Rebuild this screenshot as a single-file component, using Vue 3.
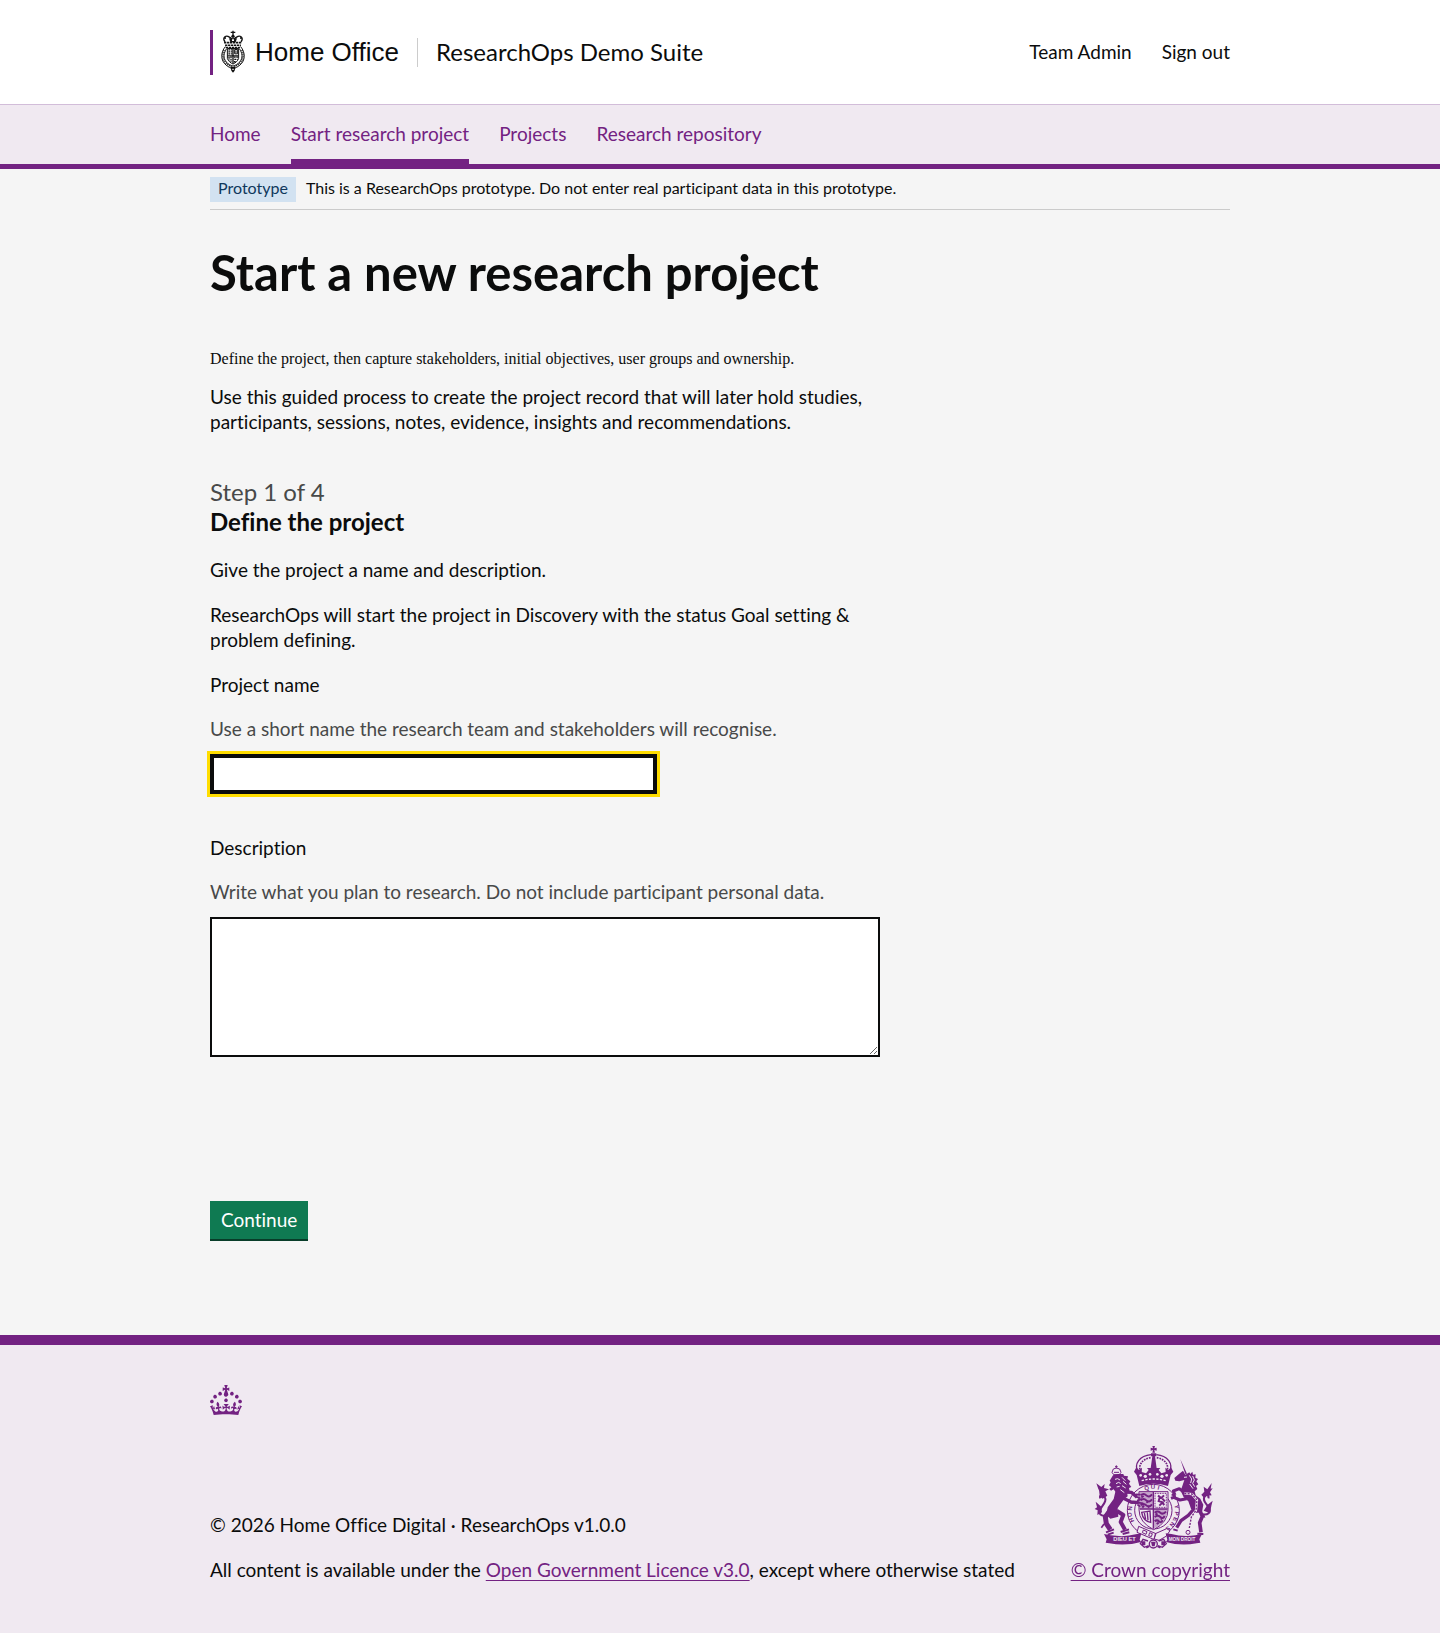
<script setup>
import { onMounted, ref } from 'vue'

const accountLinks = ['Team Admin', 'Sign out']
const navItems = ['Home', 'Start research project', 'Projects', 'Research repository']
const activeItem = 'Start research project'

const name = ref('')
const description = ref('')
const nameInput = ref(null)

onMounted(() => {
    nameInput.value.focus()
})
</script>

<template>
    <div class="page">
        <header class="header">
            <div class="container header-row">
                <a class="logo" href="#">
                    <svg class="logo-crest" viewBox="0 0 72 130" aria-hidden="true">
                        <g fill="none" stroke="#111" stroke-width="4">
                            <path d="M36 2v16M29 7h14M12 36C4 26 10 16 21 19c8 3 12 8 15 12 3-4 7-9 15-12 11-3 17 7 9 17" />
                            <path d="M9 38h54M12 46h48M14 53h44" stroke-width="5" stroke-dasharray="7 2" />
                            <path d="M13 50C-2 68-2 92 15 106c7 6 14 9 21 12 7-3 14-6 21-12 17-14 17-38 2-56" stroke-width="3" />
                            <path d="M17 56C7 70 6 84 15 96c7 8 14 11 21 13 7-2 14-5 21-13 9-12 8-26-2-40" stroke-width="3" />
                            <path d="M9 60c-6 14-5 30 8 42q9 7 19 11M63 60c6 14 5 30-8 42q-9 7-19 11" stroke-width="5" stroke-dasharray="3 3" />
                            <path d="M19 56v30c3 8 9 13 17 17 8-4 14-9 17-17V56z" stroke-width="3" />
                            <path d="M36 56v45M20 78h32" stroke-width="4" />
                            <path d="M22 60h12M22 66h12M22 72h12M24 82v10M30 80v16M39 82h12M40 89h10M39 96h7" stroke-width="4" stroke-dasharray="5 2" />
                            <path d="M41 59h9v13h-9zM45 62v8" stroke-width="3" />
                        </g>
                        <g fill="#111">
                            <circle cx="36" cy="19" r="5" />
                            <circle cx="12" cy="24" r="3" />
                            <circle cx="60" cy="24" r="3" />
                            <path d="M24 25h24l-4 12H28zM29 112h14l-2 11-5 6-5-6z" />
                        </g>
                        <path d="M33 28h6v5h-6zM34 117h4v4h-4z" fill="#fff" />
                    </svg>
                    <span>Home Office</span>
                </a>
                <a class="service-name" href="#">ResearchOps Demo Suite</a>
                <nav class="account" aria-label="Account">
                    <a v-for="link in accountLinks" :key="link" href="#">{{ link }}</a>
                </nav>
            </div>
        </header>

        <nav class="service-nav" aria-label="Service">
            <div class="container nav-list">
                <a
                    v-for="item in navItems"
                    :key="item"
                    class="nav-link"
                    :class="{ active: item === activeItem }"
                    href="#"
                >{{ item }}</a>
            </div>
        </nav>

        <div class="container">
            <div class="phase-banner">
                <strong class="tag">Prototype</strong>
                <span>This is a ResearchOps prototype. Do not enter real participant data in this prototype.</span>
            </div>
        </div>

        <main class="container main">
            <div class="two-thirds">
                <h1>Start a new research project</h1>
                <p class="summary">Define the project, then capture stakeholders, initial objectives, user groups and ownership.</p>
                <p class="intro">Use this guided process to create the project record that will later hold studies, participants, sessions, notes, evidence, insights and recommendations.</p>

                <form @submit.prevent>
                    <span class="caption">Step 1 of 4</span>
                    <h2>Define the project</h2>
                    <p>Give the project a name and description.</p>
                    <p>ResearchOps will start the project in Discovery with the status Goal setting &amp; problem defining.</p>

                    <div class="field">
                        <label for="project-name">Project name</label>
                        <div id="project-name-hint" class="hint">Use a short name the research team and stakeholders will recognise.</div>
                        <input id="project-name" ref="nameInput" v-model="name" class="input" type="text" aria-describedby="project-name-hint">
                    </div>

                    <div class="field">
                        <label for="project-description">Description</label>
                        <div id="project-description-hint" class="hint">Write what you plan to research. Do not include participant personal data.</div>
                        <textarea id="project-description" v-model="description" class="textarea" rows="5" aria-describedby="project-description-hint"></textarea>
                    </div>

                    <button class="button" type="submit">Continue</button>
                </form>
            </div>
        </main>

        <footer class="footer">
            <div class="container">
                <svg class="crown" viewBox="0 0 32 30" fill="currentColor" aria-hidden="true">
                    <path d="M22.6 10.4c-1 .4-2-.1-2.4-1-.4-.9.1-2 1-2.4.9-.4 2 .1 2.4 1s-.1 2-1 2.4m-5.9 6.7c-.9.4-2-.1-2.4-1-.4-.9.1-2 1-2.4.9-.4 2 .1 2.4 1s-.1 2-1 2.4m10.8-3.7c-1 .4-2-.1-2.4-1-.4-.9.1-2 1-2.4.9-.4 2 .1 2.4 1s0 2-1 2.4m3.3 4.8c-1 .4-2-.1-2.4-1-.4-.9.1-2 1-2.4.9-.4 2 .1 2.4 1s-.1 2-1 2.4M17 4.7l2.3 1.2V2.5l-2.3.7-.2-.2.9-3h-3.4l.9 3-.2.2c-.1.1-2.3-.7-2.3-.7v3.4L15 4.7c.1.1.1.2.2.2l-1.3 4c-.1.2-.1.4-.1.6 0 1.1.8 2 1.9 2.2h.7c1-.2 1.9-1.1 1.9-2.1 0-.2 0-.4-.1-.6l-1.3-4c-.1-.2 0-.2.1-.3m-7.6 5.7c.9.4 2-.1 2.4-1 .4-.9-.1-2-1-2.4-.9-.4-2 .1-2.4 1s0 2 1 2.4m-5 3c.9.4 2-.1 2.4-1 .4-.9-.1-2-1-2.4-.9-.4-2 .1-2.4 1s.1 2 1 2.4m-3.2 4.8c.9.4 2-.1 2.4-1 .4-.9-.1-2-1-2.4-.9-.4-2 .1-2.4 1s0 2 1 2.4m14.8 11c4.4 0 8.6.3 12.3.8 1.1-4.5 2.4-7 3.7-8.8l-2.5-.9c.2 1.3.3 1.9 0 2.7-.4-.4-.8-1.1-1.1-2.3l-1.2 4c.7-.5 1.3-.8 2-.9-1.1 2.5-2.6 3.1-3.5 3-1.1-.2-1.7-1.2-1.5-2.1.3-1.2 1.5-1.5 2.1-.1 1.1-2.3-.8-3-2-2.3 1.9-1.9 2.1-3.5.6-5.6-2.1 1.6-2.1 3.2-1.2 5.5-1.2-1.4-3.2-.6-2.5 1.6.9-1.4 2.1-.5 1.9.8-.2 1.1-1.7 2.1-3.5 1.9-2.7-.2-2.9-2.1-2.9-3.6.7-.1 1.9.5 2.9 1.9l.4-4.3c-1.1 1.1-2.1 1.4-3.2 1.4.4-1.2 2.1-3 2.1-3h-5.4s1.7 1.9 2.1 3c-1.1 0-2.1-.2-3.2-1.4l.4 4.3c1-1.4 2.2-2 2.9-1.9-.1 1.5-.2 3.4-2.9 3.6-1.9.2-3.4-.8-3.5-1.9-.2-1.3 1-2.2 1.9-.8.7-2.3-1.2-3-2.5-1.6.9-2.2.9-3.9-1.2-5.5-1.5 2-1.3 3.7.6 5.6-1.2-.7-3.1 0-2 2.3.6-1.4 1.8-1.1 2.1.1.2.9-.3 1.9-1.5 2.1-.9.2-2.4-.5-3.5-3 .6 0 1.2.3 2 .9l-1.2-4c-.3 1.1-.7 1.9-1.1 2.3-.3-.8-.2-1.4 0-2.7l-2.9.9C1.3 23 2.6 25.5 3.7 30c3.7-.5 7.9-.8 12.3-.8" />
                </svg>
                <div class="footer-row">
                    <div class="footer-text">
                        <p>© 2026 Home Office Digital · ResearchOps v1.0.0</p>
                        <p>All content is available under the <a href="#">Open Government Licence v3.0</a>, except where otherwise stated</p>
                    </div>
                    <a class="copyright" href="#">
                        <svg class="arms" viewBox="0 0 378 336" fill="currentColor" aria-hidden="true">
                            <!-- garter with its motto -->
                            <circle cx="190" cy="211" r="78" fill="#f0e9f1" stroke="currentColor" stroke-width="3" />
                            <circle cx="190" cy="211" r="56" fill="none" stroke="currentColor" stroke-width="3" />
                            <g font-size="18" font-weight="bold" font-family="Liberation Sans, sans-serif" text-anchor="middle">
                                <text transform="translate(130 238) rotate(-114)">H</text>
                                <text transform="translate(125 223) rotate(-98)">O</text>
                                <text transform="translate(126 206) rotate(-84)">N</text>
                                <text transform="translate(129 191) rotate(-70)">I</text>
                                <text transform="translate(172 150) rotate(-16)">Q</text>
                                <text transform="translate(189 147)">U</text>
                                <text transform="translate(204 149) rotate(14)">I</text>
                                <text transform="translate(254 201) rotate(82)">Y</text>
                                <text transform="translate(254 220) rotate(98)">P</text>
                                <text transform="translate(250 236) rotate(114)">E</text>
                                <text transform="translate(242 250) rotate(128)">N</text>
                                <text transform="translate(230 261) rotate(142)">S</text>
                            </g>

                            <!-- crown -->
                            <path d="M142 88q48-92 96 0l-10 44h-76z" fill="#f0e9f1" />
                            <path d="M187 18h8l-2 7 7-2v9l-7-2 2 8h-8l2-8-7 2v-9l7 2zM183 40h16v9h-16zM187 49h8l5 36-9 15-9-15z" />
                            <g fill="none" stroke="currentColor">
                                <path d="M144 98c-14-28 6-51 39-54M238 98c14-28-6-51-39-54" stroke-width="4" />
                                <path d="M152 96c-9-21 5-39 30-43M230 96c9-21-5-39-30-43" stroke-width="5" stroke-dasharray="5 3" />
                            </g>
                            <path d="M139 82l8 8 9-7-1 13 13 4 8-10-5-6h40l-5 6 8 10 13-4-1-13 9 7 8-8 7 13-8 10-8 33q-43-14-86 0l-8-33-8-10z" />
                            <g fill="#f0e9f1">
                                <circle cx="152" cy="106" r="4" />
                                <circle cx="166" cy="109" r="5" />
                                <circle cx="180" cy="103" r="4" />
                                <circle cx="202" cy="103" r="4" />
                                <circle cx="216" cy="109" r="5" />
                                <circle cx="230" cy="106" r="4" />
                            </g>
                            <path d="M155 122q36-10 72 0" fill="none" stroke="#f0e9f1" stroke-width="4" stroke-dasharray="7 4" />

                            <!-- quartered shield -->
                            <path d="M147 155h87v54q0 38-43 60-44-22-44-60z" fill="#f0e9f1" stroke="currentColor" stroke-width="3" />
                            <path d="M149 157h40v49h-40zM191 207h41q0 38-41 59z" opacity=".35" />
                            <g fill="none" stroke="currentColor">
                                <path d="M190 156v110M149 207h84" stroke-width="4" />
                                <path d="M152 166q9-8 17 0t17-3M152 181q9-8 17 0t17-3M152 196q9-8 17 0t17-3M154 172l7-4M169 188l8-5M157 203l5-7M174 203l5-7" stroke-width="6" />
                                <path d="M195 160h34v42h-34z" stroke-width="3" stroke-dasharray="3 2" />
                                <path d="M204 167l10 7 8-8M210 169l-4 14 12 4-10 10M217 176l8 8M216 187l7 8" stroke-width="6" />
                                <path d="M155 217l25-4 2 34q-23-4-27-30zM163 219l4 19M172 217l2 24" stroke-width="4" />
                                <path d="M194 218q9-7 17 0t17-3M194 231q9-7 17 0t13-3M194 244q7-6 13 0t11-3M197 225l5-5M212 238l5-5M200 252l6-4" stroke-width="6" />
                            </g>

                            <!-- garter buckle -->
                            <path d="M146 259l52 22-7 17-50-21zM196 281l34-15 10 6-12 17-21 12-14-4z" fill="#f0e9f1" stroke="currentColor" stroke-width="3" />
                            <path d="M160 270l11 5-3 8-11-5zM179 278l8 3-3 9-8-3z" fill="none" stroke="currentColor" stroke-width="3" />

                            <!-- lion -->
                            <path d="M66 97l4-10 9-3 10 3 4 10-5 7H71z" fill="none" stroke="currentColor" stroke-width="3" />
                            <path d="M79 76v9M75 80h8M72 97h15" stroke="currentColor" stroke-width="3" />
                            <path d="M69 106l14-4 17 0 2 5 12 2-2 7 9 8-4 7 7 10-7 3 2 10-8 1 2 14-10 7-20 28 2 26-24 6-12-12 4-22 18-25 5-22-5-7-8 4-5-5 6-5-7-6 5-9-3-5z" />
                            <g fill="none" stroke="currentColor" stroke-linejoin="round">
                                <path d="M104 156l20 1 17 15" stroke-width="10" />
                                <path d="M99 174l24 12 23 2" stroke-width="10" />
                                <path d="M137 163l14 1M139 171l12 4M141 182l15-5M144 188l16 2M142 194l9 6" stroke-width="5" />
                                <path d="M63 208l-17 23 3 20 12 18" stroke-width="15" />
                                <path d="M42 252l-8 11" stroke-width="5" />
                                <path d="M81 213l19 12-8 21 13 23" stroke-width="12" />
                                <path d="M48 277l24-9M53 284l18-6M92 276l25-8M98 282l20-5" stroke-width="6" />
                                <path d="M52 225c-19 6-29-4-20-19 8-14 20-23 11-37-6-8-16-4-12 6" stroke-width="6" />
                            </g>
                            <path d="M38 176c-14-7-7-22-13-29l-6-17 15 11 10-9-2 12 15 4-11 6 6 13zM34 200l-17-15 4 17-7 5 9 4-1 14 14-8z" />
                            <path d="M75 118l8-2 7 4M78 131l8-4 6 4M80 141l9-2M96 112l10 10M99 124l10 9M96 137l11 7M91 149l12 9" fill="none" stroke="#f0e9f1" stroke-width="3" />

                            <!-- unicorn -->
                            <path d="M271 58l20 43-5 2z" />
                            <path d="M286 104l12-7 3 5 6-7 2 9 8-1-1 10 8 4-5 7 6 9-7 5 4 9-8 7 3 12 14 10 9 18-4 23-21 2-12-13-8-22-14-12-9-20 6-17 5-15-15 4-12-2-3-8 13-11 13-11z" />
                            <g fill="none" stroke="currentColor" stroke-linejoin="round">
                                <path d="M285 158l-17-12-18 7 5 12" stroke-width="9" />
                                <path d="M290 176l-20 4-19-8-8 3" stroke-width="9" />
                                <path d="M326 204l11 25-8 19 4 29" stroke-width="11" />
                                <path d="M309 210l-14 16-22 16-13 21" stroke-width="10" />
                                <path d="M322 281l18 1M250 268l13 4M245 163l12 6" stroke-width="6" />
                                <path d="M333 222c21 6 32-5 23-20-8-13-20-21-12-33 6-7 14-3 11 6" stroke-width="6" />
                            </g>
                            <path d="M342 174l-8-10 9-9-2-15 11 8 13-19-3 17 6-1-8 12 5 9-15 2zM352 195l16-13-4 16-4 22-19-8zM334 228l12 6-4-14z" />
                            <path d="M282 112l9-1M298 106l7 11-3 12M308 108l5 12-5 10 6 10M299 132l10 14" fill="none" stroke="#f0e9f1" stroke-width="3" />
                            <path d="M283 160l23 2 15 18-3 31-14 20-6 33" fill="none" stroke="#f0e9f1" stroke-width="7" />
                            <path d="M283 160l23 2 15 18-3 31-14 20-6 33" fill="none" stroke="currentColor" stroke-width="4" stroke-dasharray="6 4" />
                            <circle cx="294" cy="277" r="6" fill="#f0e9f1" stroke="currentColor" stroke-width="3" />

                            <!-- compartment and scrolls -->
                            <path d="M42 282l20 4q44 6 75-3l17-3-5 19 4 7q-46 13-95 4l-11-2 3-10zM336 282l-20 4q-39 5-72-4l-17-2 5 19-4 7q44 13 92 4l11-2-3-10z" />
                            <g fill="#f0e9f1" font-size="17" font-weight="bold" font-family="Liberation Sans, sans-serif">
                                <text x="70" y="304">DIEU ET</text>
                                <text x="236" y="303" font-size="14">MON DROIT</text>
                            </g>
                            <g fill="none" stroke="currentColor" stroke-width="4">
                                <circle cx="190" cy="312" r="12" />
                                <path d="M174 303l-15-5-8 13 12 11 13-5M206 303l15-5 8 13-12 11-13-5M178 319l-9 5M202 319l9 5" />
                            </g>
                            <path d="M183 305h14l-3 14h-8zM155 304h11v12h-11zM214 304h11v12h-11z" />
                        </svg>
                        <span>© Crown copyright</span>
                    </a>
                </div>
            </div>
        </footer>
    </div>
</template>

<style>
body {
    margin: 0;
    background-color: #f5f5f5;
}
</style>

<style scoped>
.page {
    color: #0b0c0c;
    font-family: Lato, "Liberation Sans", sans-serif;
    font-size: 19px;
    font-variant-ligatures: none;
    line-height: 25px;
}

.page * {
    box-sizing: border-box;
}

.container {
    max-width: 1080px;
    margin: 0 auto;
    padding: 0 30px;
}

.header {
    background-color: #fff;
    border-bottom: 1px solid #d2bdd9;
}

.header-row {
    display: flex;
    flex-wrap: wrap;
    align-items: center;
    gap: 18px;
    padding-top: 30px;
    padding-bottom: 29px;
}

.header a {
    color: inherit;
    text-decoration: none;
}

.logo {
    display: flex;
    align-items: center;
    gap: 10px;
    height: 45px;
    padding-left: 8px;
    border-left: 3px solid #732282;
    font-family: "Liberation Sans", sans-serif;
    font-size: 26px;
}

.logo-crest {
    align-self: flex-start;
    width: 24px;
    height: 43px;
}

.service-name {
    padding: 0 0 2px 18px;
    border-left: 1px solid #ccc;
    font-size: 24px;
    line-height: 27px;
}

.account {
    display: flex;
    gap: 30px;
    margin-left: auto;
    padding-bottom: 2px;
}

.service-nav {
    background-color: #f0e9f1;
    border-bottom: 5px solid #732282;
}

.nav-list {
    display: flex;
    flex-wrap: wrap;
    gap: 0 30px;
}

.nav-link {
    padding: 16px 0 13px;
    border-bottom: 5px solid transparent;
    color: #732282;
    text-decoration: none;
}

.nav-link.active {
    border-bottom-color: #732282;
}

.phase-banner {
    display: flex;
    align-items: baseline;
    gap: 10px;
    padding: 8px 0 7px;
    border-bottom: 1px solid #cbcbcb;
    font-size: 16px;
    line-height: 20px;
}

.tag {
    padding: 1px 8px 4px;
    background-color: #d2e2f1;
    color: #0f385c;
    font-weight: normal;
}

.main {
    padding-top: 37px;
    padding-bottom: 94px;
}

.two-thirds {
    max-width: 670px;
}

h1 {
    margin: 0 0 53px;
    font-size: 49px;
    line-height: 50px;
}

h2 {
    margin: 0 0 20px;
    font-size: 24px;
    line-height: 30px;
}

p {
    margin: 0 0 20px;
}

.summary {
    margin-bottom: 16px;
    font-family: "Liberation Serif", serif;
    font-size: 16px;
    line-height: 18px;
}

.intro {
    margin-bottom: 43px;
}

.caption {
    display: block;
    color: #484949;
    font-size: 24px;
    line-height: 30px;
}

.field {
    margin-bottom: 41px;
}

.field label {
    display: block;
    margin-bottom: 19px;
}

.hint {
    margin-bottom: 13px;
    color: #484949;
}

.input,
.textarea {
    display: block;
    padding: 5px;
    border: 2px solid #0b0c0c;
    border-radius: 0;
    background-color: #fff;
    color: inherit;
    font: inherit;
}

.input {
    width: 66.67%;
    height: 40px;
}

.textarea {
    width: 100%;
    height: 140px;
    margin-bottom: 144px;
    resize: vertical;
}

.input:focus,
.textarea:focus {
    outline: 3px solid #ffdd00;
    box-shadow: inset 0 0 0 2px #0b0c0c;
}

.button {
    display: block;
    margin-bottom: 2px;
    padding: 7px 11px 8px;
    border: 0;
    background-color: #0f7a52;
    box-shadow: 0 2px 0 #083d29;
    color: #fff;
    font: inherit;
    line-height: 23px;
    cursor: pointer;
}

.footer {
    padding: 40px 0 51px;
    border-top: 10px solid #732282;
    background-color: #f0e9f1;
}

.footer a {
    color: #732282;
    text-decoration-thickness: 1px;
    text-underline-offset: 3px;
}

.crown {
    display: block;
    width: 32px;
    height: 30px;
    margin-bottom: 25px;
    color: #732282;
}

.footer-row {
    display: flex;
    flex-wrap: wrap;
    align-items: flex-end;
    justify-content: space-between;
    gap: 20px;
}

.footer-text p:last-child {
    margin-bottom: 0;
}

.copyright {
    display: flex;
    flex-direction: column;
    align-items: flex-end;
    gap: 5px;
}

.arms {
    width: 126px;
    height: 112px;
    margin-right: 14px;
}
</style>
